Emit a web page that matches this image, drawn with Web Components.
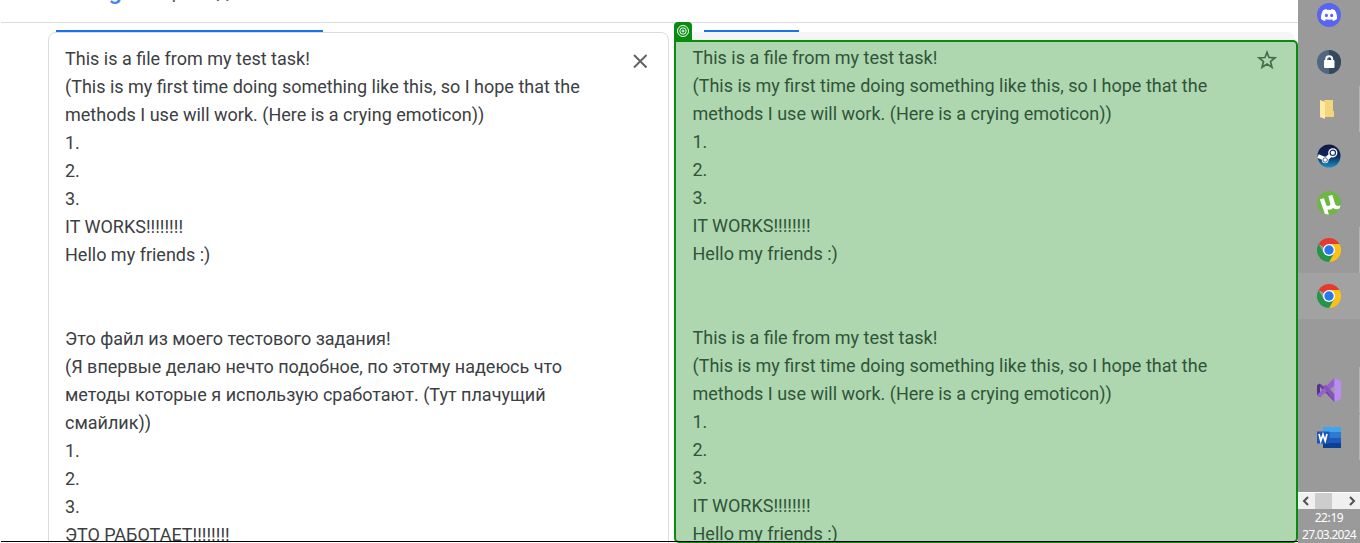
<!DOCTYPE html>
<html lang="ru">
<head>
<meta charset="utf-8">
<title>Переводчик</title>
<style>
html,body{margin:0;height:543px;overflow:hidden;background:#fff}
</style>
</head>
<body>
<translate-desktop></translate-desktop>
<script>
const define = (name, html) => customElements.define(name, class extends HTMLElement {
  constructor(){ super(); this.attachShadow({mode:'open'}).innerHTML = html; }
});

define('page-header', `<style>
:host{display:flex;height:22px;overflow:hidden;border-bottom:1px solid #dadce0;margin-left:1px;padding-left:64px}
</style><slot></slot>`);

define('brand-title', `<style>
:host{display:flex;height:22px;font:20.500px/26px Roboto,sans-serif;color:#5f6368;white-space:nowrap}
b{font:500 24px/26px Roboto,sans-serif;color:#4285f4;width:81px;margin-top:-22px}
span{margin-top:-22px}
</style><b>Google</b><span><slot></slot></span>`);

define('text-panel', `<style>
:host{display:flex;box-sizing:border-box;font:18px/28px Roboto,sans-serif;overflow:hidden;justify-content:space-between;align-items:flex-start}
.t{white-space:pre;flex:none}
</style><div class="t"><slot></slot></div><slot name="icon"></slot>`);

define('task-button', `<style>
:host{display:flex;height:46px;box-sizing:border-box;align-items:center;padding-left:19px}
:host([open]){box-shadow:inset -1px 0 #b4b4b4}
:host([active]){background:#a2a2a2}
::slotted(*){display:block;width:24px;height:24px}
</style><slot></slot>`);

define('chrome-icon', `<style>:host,svg{display:block;width:24px;height:24px}</style>
<svg viewBox="0 0 24 24"><path fill="#e33b2e" d="M12 12 1.600 6a12 12 0 0 1 20.800 0z"/><path fill="#fbc116" d="M12 6h10.400A12 12 0 0 1 12 24l5.200-9z"/><path fill="#269547" d="M1.600 6 6.800 15 12 18l5.200-3L12 24A12 12 0 0 1 1.600 6z"/><circle cx="12" cy="12" r="6" fill="#fff"/><circle cx="12" cy="12" r="4.700" fill="#2878ed"/></svg>`);

define('scroll-strip', `<style>
:host{display:flex;height:16px;background:#f0f0f0;border-top:1px solid #fff;align-items:center}
i{width:17px;height:16px;background:#cdcdcd}
svg{display:block;width:17px;height:16px;fill:none;stroke:#505050;stroke-width:2}
span{flex:1}
</style><svg viewBox="0 0 17 16"><path d="M10 4 6 8l4 4"/></svg><i></i><span></span><svg viewBox="0 0 17 16"><path d="m7 4 4 4-4 4"/></svg>`);

define('task-bar', `<style>
:host{display:flex;flex-direction:column;width:62px;height:543px;background:#9a9a9a}
task-button{margin-bottom:1px;flex:none}
task-button:first-of-type{margin-top:-8px}
.tight{margin-bottom:0}
.gap{height:47px;flex:none}
.fill{flex:1}
.clock{height:34px;font:12px/17px "Noto Sans","Open Sans",sans-serif;color:#fff;text-align:center;letter-spacing:-.75px}
.clock span{letter-spacing:-.4px}
scroll-strip{flex:none}
</style>
<task-button><svg viewBox="0 0 24 24"><circle cx="12" cy="12" r="12" fill="#5865f2"/><path fill="#fff" d="M17.700 7.100a13 13 0 0 0-3.200-1l-.5.9a12 12 0 0 0-4 0l-.5-.9a13 13 0 0 0-3.200 1C4.300 10.200 3.800 13 4 16c1.300 1 2.700 1.600 4 2l1-1.500c-.5-.2-1-.4-1.400-.7 2.700 1.300 6.100 1.300 8.800 0-.4.3-.9.500-1.400.7l1 1.500c1.400-.4 2.700-1 4-2 .3-3.400-.6-6.300-2.300-8.900zM9.400 14c-.8 0-1.500-.7-1.500-1.600s.6-1.600 1.500-1.600 1.500.7 1.500 1.600-.7 1.600-1.500 1.600zm5.300 0c-.8 0-1.500-.7-1.500-1.600s.6-1.600 1.500-1.600 1.500.7 1.500 1.600-.7 1.600-1.500 1.600z"/></svg></task-button>
<task-button><svg viewBox="0 0 24 24"><circle cx="12" cy="12" r="12" fill="#50677f"/><path fill="#34495e" d="M12 0a12 12 0 0 1 0 24z"/><rect x="7" y="10" width="10.500" height="8" rx="1" fill="#fff"/><path d="M9.200 11V9.200a3 3 0 0 1 6 0V11" fill="none" stroke="#fff" stroke-width="2"/></svg></task-button>
<task-button open><svg viewBox="0 0 24 24"><path fill="#eac668" d="M7 3h9v12h1v5H6z"/><path fill="#f5d57a" d="M8 3h8v11h1v6H8z"/><path fill="#ffe9a6" d="m3 3 5 2v17l-5-2z"/></svg></task-button>
<task-button><svg viewBox="0 0 24 24"><defs><linearGradient id="s" x2="0" y2="1"><stop stop-color="#12183d"/><stop offset=".5" stop-color="#0c285a"/><stop offset="1" stop-color="#198fc5"/></linearGradient></defs><circle cx="12" cy="12" r="11.500" fill="url(#s)"/><path d="m1 12 7 3M8 16l7-6" stroke="#fff" stroke-width="4"/><circle cx="8.200" cy="16" r="3.300" fill="#fff"/><circle cx="8.200" cy="16" r="2.200" fill="none" stroke="#294873" stroke-width=".8"/><circle cx="15.800" cy="8.800" r="4.600" fill="#fff"/><circle cx="15.800" cy="8.800" r="2.700" fill="#fff" stroke="#173466" stroke-width="1.200"/></svg></task-button>
<task-button><svg viewBox="0 0 24 24"><circle cx="12" cy="12" r="12" fill="#6fb743"/><path fill="#fff" d="m2.800 8.200 4.200-1 2 6.300c.8 2.300 4.800 2 4.300-1L11.300 5l4-.9 2.700 8.700c.7 2 2.300 2.800 5.500 1.700l-1 3c-2.500 1.300-5 .8-6.400-.8-1 1.700-3.600 2.500-5.600 1.600l1.300 5.200-3.900-.6z"/></svg></task-button>
<task-button open class="tight"><chrome-icon></chrome-icon></task-button>
<task-button active><chrome-icon></chrome-icon></task-button>
<div class="gap"></div>
<task-button open><svg viewBox="0 0 24 24"><path fill="#52338a" d="M0 7l3-1.500V9v6.500l1 3-1 .5-3-2z"/><path fill="#6a409c" d="M3 5.500 6 8l11.500 8.500V24L3 9z"/><path fill="#9460cc" d="M3 19 0 17l5-5L17.500 0v7.800z"/><path fill="#8752be" d="m6 8 3-1 8.500 9.200V24z"/><path fill="#ba8df2" d="m17.500 0 6.500 3v18l-6.500 3z"/></svg></task-button>
<task-button open><svg viewBox="0 0 24 24"><path fill="#41a5ee" d="M6 2h18v5H6z"/><path fill="#2b7cd3" d="M6 7h18v5.500H6z"/><path fill="#185abd" d="M6 12.500h18V18H6z"/><path fill="#103f91" d="M6 18h18v5H6z"/><path fill="#1956b5" d="M0 6.500h12.500v12H0z"/><path d="m2 9 1.800 7 2.200-6.500L8.200 16 10 9" fill="none" stroke="#fff" stroke-width="1.700"/></svg></task-button>
<div class="fill"></div><scroll-strip></scroll-strip>
<div class="clock"><span>22:19</span><br>27.03.2024</div>`);

define('translate-desktop', `<style>
:host{display:flex;width:1360px;height:543px;overflow:hidden;position:relative}
.app{width:1298px;height:543px;flex:none;display:flex;flex-direction:column}
.work{display:flex;height:520px;position:relative}
.left{width:674px;flex:none}
.right{width:624px;flex:none}
.tab{height:2px;background:#1a73e8;margin-top:7px}
.left .tab{width:267px;margin-left:56px}
.right .tab{width:95px;margin-left:30px}
.source{width:621px;height:520px;margin-left:48px;border:1px solid #dadce0;border-radius:8px 8px 0 0;padding:12px 19px 0 16px;color:#3c4043}
.shade{background:#f5f5f5;height:511px;border-radius:0 8px 0 0;padding-top:8px;box-sizing:border-box;margin-right:3px}
.target{width:624px;height:503px;border:2px solid #0a8a0f;border-radius:0 5px 5px 5px;background:#aed7af;padding:2px 19px 0 16.500px;color:#30543a}
.target svg{width:20px;height:20px;margin-top:6px}
.source svg{width:18px;height:18px;margin-top:7px}
svg{display:block;fill:none;flex:none}
.badge{position:absolute;left:674px;top:-1px;width:18px;height:20px;background:#088c10;border-radius:4px 4px 0 0;box-sizing:border-box;padding:3px}
.badge svg{width:12px;height:12px}
.line{position:absolute;left:1px;top:541px;width:1297px;height:1px;background:#000}
</style>
<div class="app"><page-header><brand-title>Переводчик</brand-title></page-header>
<div class="work"><div class="left"><div class="tab"></div><text-panel class="source">This is a file from my test task!
(This is my first time doing something like this, so I hope that the
methods I use will work. (Here is a crying emoticon))
1.
2.
3.
IT WORKS!!!!!!!!
Hello my friends :)


Это файл из моего тестового задания!
(Я впервые делаю нечто подобное, по этотму надеюсь что
методы которые я использую сработают. (Тут плачущий
смайлик))
1.
2.
3.
ЭТО РАБОТАЕТ!!!!!!!!<svg slot="icon" viewBox="0 0 18 18"><path d="m3 3 12.500 12.500M15.500 3 3 15.500" stroke="#5f6368" stroke-width="2"/></svg></text-panel></div>
<div class="right"><div class="tab"></div><div class="shade"><text-panel class="target">This is a file from my test task!
(This is my first time doing something like this, so I hope that the
methods I use will work. (Here is a crying emoticon))
1.
2.
3.
IT WORKS!!!!!!!!
Hello my friends :)


This is a file from my test task!
(This is my first time doing something like this, so I hope that the
methods I use will work. (Here is a crying emoticon))
1.
2.
3.
IT WORKS!!!!!!!!
Hello my friends :)<svg slot="icon" viewBox="0 0 20 20"><path d="m10 2.200 2 5.300 6 .3-4.500 3.700 1.500 5.800-5-3.200-5 3.200 1.500-5.800L2 7.800l6-.3z" stroke="#456e4c" stroke-width="1.700"/></svg></text-panel></div></div>
<div class="badge"><svg viewBox="0 0 12 12" stroke="#fff" stroke-width="1"><circle cx="6" cy="6" r="5.500"/><circle cx="6" cy="6" r="3.200"/><circle cx="6" cy="6" r="1"/></svg></div>
</div></div><task-bar></task-bar><div class="line"></div>`);
</script>
</body>
</html>
